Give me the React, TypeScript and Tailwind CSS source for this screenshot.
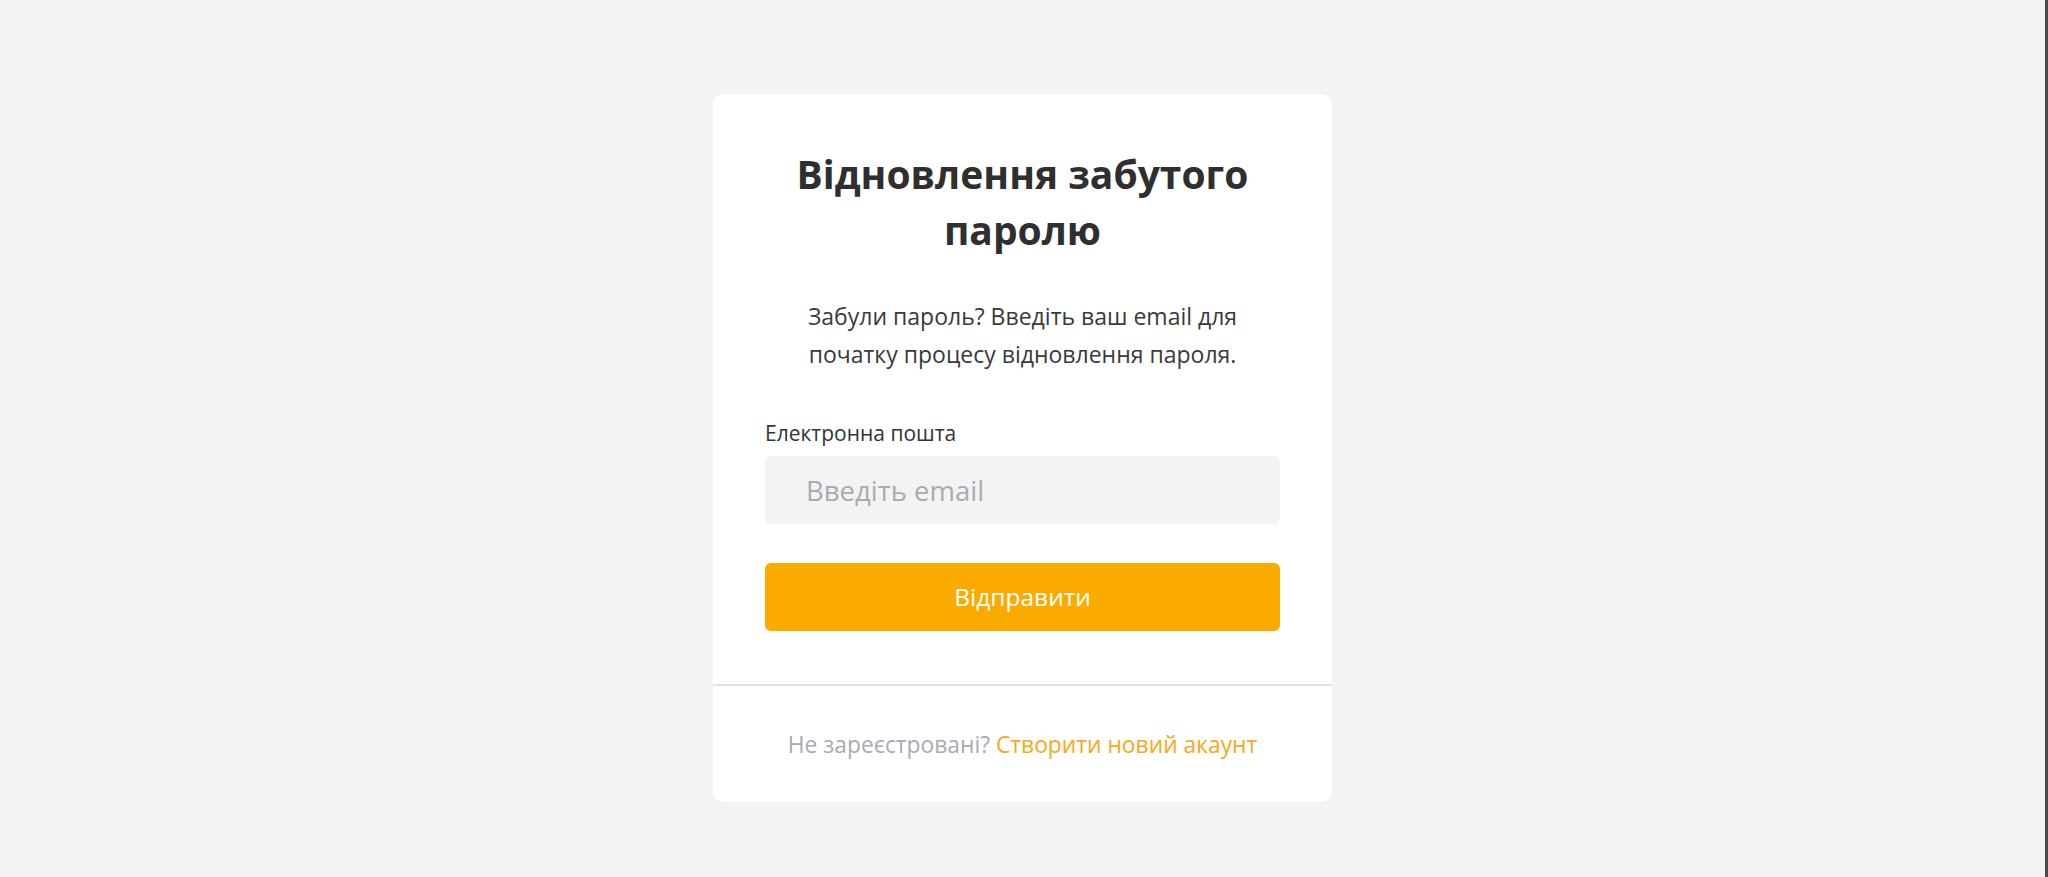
import { useState } from "react"

const FONT = { fontFamily: '"Open Sans", "Noto Sans", sans-serif' }

export default function App() {
  const [email, setEmail] = useState("")

  return (
    <div className="flex min-h-[877px] bg-[#f3f3f3]" style={FONT}>
      <main className="flex-1 pt-[94px]">
        <div className="mx-auto w-[619px] overflow-hidden rounded-[10px] bg-white">
          <div className="px-[52px] pt-[52px] pb-[53px]">
            <h1 className="text-center text-[39px] font-bold leading-[56px] text-[#2f2f2f]">
              Відновлення забутого
              <br />
              паролю
            </h1>
            <p className="mt-[39px] text-center text-[23px] leading-[38px] text-[#3a3a3a]">
              Забули пароль? Введіть ваш email для
              <br />
              початку процесу відновлення пароля.
            </p>

            <form className="mt-[46px]" onSubmit={(e) => e.preventDefault()}>
              <label
                htmlFor="email"
                className="block text-[21px] leading-[29px] text-[#333333]"
              >
                Електронна пошта
              </label>
              <input
                id="email"
                type="email"
                value={email}
                onChange={(e) => setEmail(e.target.value)}
                placeholder="Введіть email"
                className="mt-[8px] block h-[68px] w-full rounded-[6px] bg-[#f3f3f3] pl-[41px] pr-4 text-[27.5px] text-[#333] outline-none placeholder:text-[#a9abb3]"
              />
              <button
                type="submit"
                className="mt-[39px] block h-[68px] w-full rounded-[6px] bg-[#fbab00] text-[24.5px] text-white"
              >
                Відправити
              </button>
            </form>
          </div>

          <div className="border-t-2 border-[#e2e2e2] pt-[44px] pb-[42px] text-center text-[22.8px] leading-[30px]">
            <span className="text-[#a8abb5]">Не зареєстровані? </span>
            <a href="#" className="text-[#f7a81b]">
              Створити новий акаунт
            </a>
          </div>
        </div>
      </main>
      <div className="w-[3px] bg-[#4a4a4a]" />
    </div>
  )
}
